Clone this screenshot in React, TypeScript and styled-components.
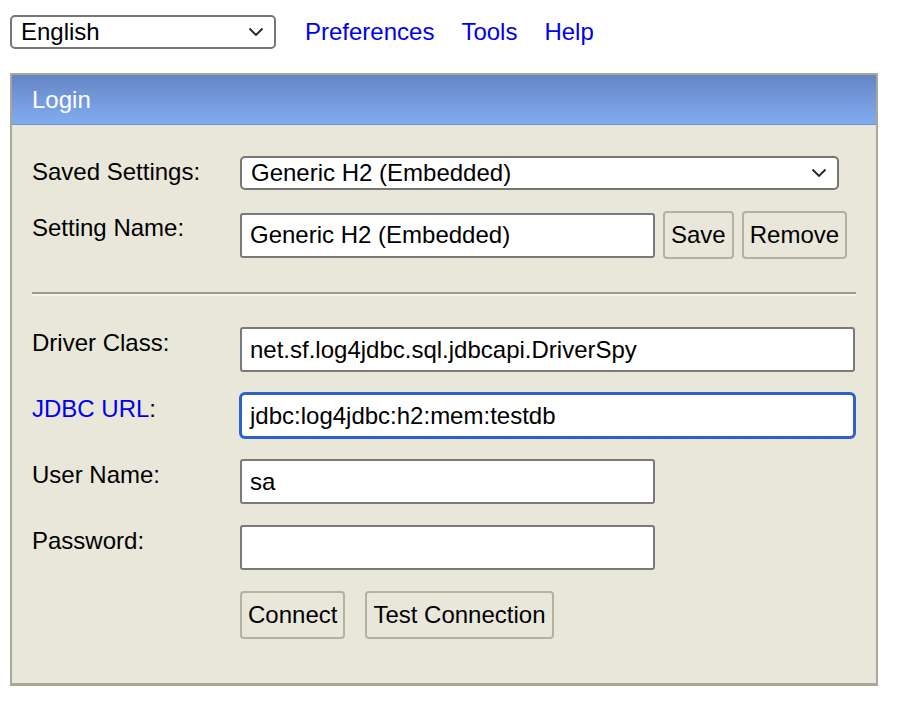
import styled, { createGlobalStyle } from 'styled-components'

const GlobalStyle = createGlobalStyle`
  html, body {
    margin: 0;
    padding: 0;
    background: #ffffff;
  }
  body {
    font-family: 'Liberation Sans', Arial, sans-serif;
    font-size: 24px;
    color: #000;
  }
`

const Page = styled.div`
  padding: 15px 0 0 10px;
`

const TopBar = styled.div`
  display: flex;
  align-items: center;
  gap: 28px;
  height: 34px;
`

const SelectBox = styled.div<{ $width: number; $height: number }>`
  position: relative;
  box-sizing: border-box;
  width: ${(p) => p.$width}px;
  height: ${(p) => p.$height}px;
  display: flex;
  align-items: center;
  padding-left: 9px;
  background: #fff;
  border: 2px solid #767676;
  border-radius: 5px;
  font-size: 24px;
  color: #000;
`

const Chevron = styled.svg`
  position: absolute;
  right: 10px;
  top: 50%;
  margin-top: -5px;
`

const LinkRow = styled.div`
  display: flex;
  gap: 27px;
  margin-left: 1px;
`

const TopLink = styled.a`
  color: #0000ee;
  text-decoration: none;
  font-size: 24px;
`

const Panel = styled.div`
  box-sizing: border-box;
  width: 868px;
  margin-top: 24px;
  border: 2px solid #a9a796;
  border-bottom-width: 3px;
  background: #e9e7da;
`

const PanelHeader = styled.div`
  height: 49px;
  display: flex;
  align-items: center;
  padding-left: 20px;
  background: linear-gradient(#6585c5, #81acf0);
  border-bottom: 1px solid #6b93dc;
  color: #fff;
  font-size: 24px;
`

const PanelBody = styled.div`
  padding: 31px 20px 44px 20px;
`

const FormGrid = styled.div`
  display: grid;
  grid-template-columns: 208px auto;
  row-gap: 21px;
  align-items: start;
`

const Label = styled.div<{ $offset?: number }>`
  padding-top: ${(p) => p.$offset ?? 2}px;
  font-size: 24px;
  line-height: 28px;
`

const LinkLabel = styled.span`
  color: #0000ee;
`

const FieldRow = styled.div`
  display: flex;
  align-items: center;
  gap: 8px;
`

const TextField = styled.div<{ $width: number; $focused?: boolean }>`
  box-sizing: border-box;
  width: ${(p) => p.$width}px;
  height: 45px;
  display: flex;
  align-items: center;
  padding-left: 8px;
  background: #fff;
  border: 2px solid ${(p) => (p.$focused ? '#2d62cb' : '#7a7a7a')};
  border-radius: ${(p) => (p.$focused ? '5px' : '3px')};
  box-shadow: ${(p) => (p.$focused ? '0 0 0 1px #2d62cb' : 'none')};
  font-size: 24px;
  white-space: nowrap;
`

const Button = styled.button`
  box-sizing: border-box;
  height: 48px;
  padding: 0 6px;
  background: #e9e7da;
  border: 2px solid #b4b1a2;
  border-radius: 4px;
  font-family: 'Liberation Sans', Arial, sans-serif;
  font-size: 24px;
  color: #000;
`

const Divider = styled.div`
  grid-column: 1 / -1;
  margin: 12px 0 10px 0;
  border-top: 2px solid #9b9a92;
  border-bottom: 2px solid #f3f2ec;
`

const ButtonRow = styled.div`
  display: flex;
  gap: 20px;
`

const ChevronIcon = () => (
  <Chevron width="16" height="10" viewBox="0 0 16 10">
    <path d="M1.5 1.5 L8 8 L14.5 1.5" fill="none" stroke="#222" strokeWidth="1.8" />
  </Chevron>
)

const App = () => {
  return (
    <Page>
      <GlobalStyle />
      <TopBar>
        <SelectBox $width={266} $height={34}>
          English
          <ChevronIcon />
        </SelectBox>
        <LinkRow>
          <TopLink href="#">Preferences</TopLink>
          <TopLink href="#">Tools</TopLink>
          <TopLink href="#">Help</TopLink>
        </LinkRow>
      </TopBar>
      <Panel>
        <PanelHeader>Login</PanelHeader>
        <PanelBody>
          <FormGrid>
            <Label>Saved Settings:</Label>
            <SelectBox $width={599} $height={34}>
              Generic H2 (Embedded)
              <ChevronIcon />
            </SelectBox>

            <Label $offset={3}>Setting Name:</Label>
            <FieldRow>
              <TextField $width={415}>Generic H2 (Embedded)</TextField>
              <Button>Save</Button>
              <Button>Remove</Button>
            </FieldRow>

            <Divider />

            <Label>Driver Class:</Label>
            <TextField $width={615}>net.sf.log4jdbc.sql.jdbcapi.DriverSpy</TextField>

            <Label>
              <LinkLabel>JDBC URL</LinkLabel>:
            </Label>
            <TextField $width={615} $focused>
              jdbc:log4jdbc:h2:mem:testdb
            </TextField>

            <Label>User Name:</Label>
            <TextField $width={415}>sa</TextField>

            <Label>Password:</Label>
            <TextField $width={415} />

            <div />
            <ButtonRow>
              <Button>Connect</Button>
              <Button>Test Connection</Button>
            </ButtonRow>
          </FormGrid>
        </PanelBody>
      </Panel>
    </Page>
  )
}

export default App
